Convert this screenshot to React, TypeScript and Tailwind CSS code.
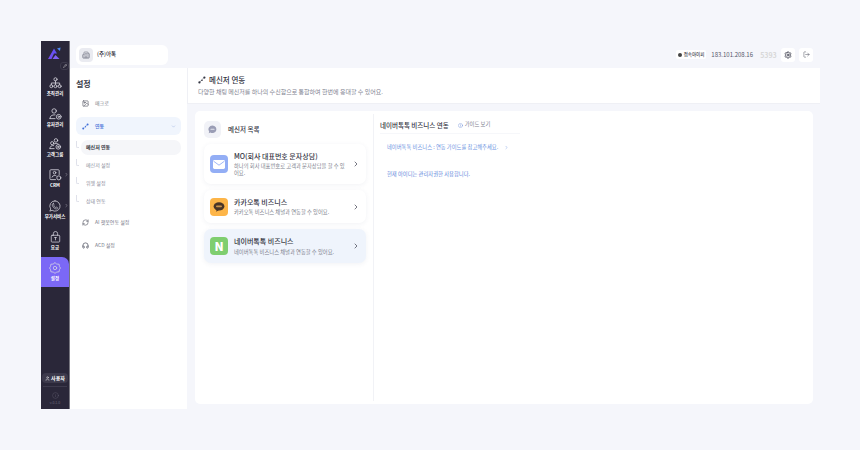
import {
  Building2,
  ChevronDown,
  ChevronRight,
  Headphones,
  Info,
  LogOut,
  Pencil,
  RefreshCw,
  Settings,
  User,
  Image,
} from "lucide-react";

const font = "font-['Noto_Sans_CJK_KR','Noto_Sans',sans-serif]";

function Logo() {
  return (
    <svg viewBox="0 0 16 13" className="h-[13px] w-[16px]">
      <defs>
        <linearGradient id="logo" x1="0" y1="0" x2="1" y2="0">
          <stop offset="0" stopColor="#7a4df0" />
          <stop offset="1" stopColor="#5a52f5" />
        </linearGradient>
      </defs>
      <path d="M1 12 L7 1.5 L10 6.5 L7 6.5 L4.5 12 Z" fill="url(#logo)" />
      <path d="M5.5 12 L8.5 8 L12.5 12 Z" fill="#7f62f6" />
      <path d="M10 1.5 L13.5 0.5 L13 4 Z" fill="#4d8df7" />
    </svg>
  );
}

const stroke = {
  fill: "none",
  stroke: "currentColor",
  strokeWidth: 0.85,
  strokeLinecap: "round" as const,
  strokeLinejoin: "round" as const,
};

function OrgIcon() {
  return (
    <svg viewBox="0 0 14 13" className="h-[12px] w-[13px]" {...stroke}>
      <circle cx="7" cy="2.5" r="1.7" />
      <path d="M7 4.2 V8 M2.5 8.5 V6.5 H11.5 V8.5" />
      <circle cx="2.5" cy="10" r="1.6" />
      <circle cx="7" cy="10" r="1.6" />
      <circle cx="11.5" cy="10" r="1.6" />
    </svg>
  );
}

function UserGearIcon() {
  return (
    <svg viewBox="0 0 14 13" className="h-[12px] w-[13px]" {...stroke}>
      <circle cx="5.5" cy="3.2" r="2.4" />
      <path d="M1 11.5 C1 8.5 3 7.2 6.5 7.4 M1 11.5 H6.5" />
      <circle cx="10.5" cy="9.5" r="2.6" />
      <circle cx="10.5" cy="9.5" r="0.8" />
    </svg>
  );
}

function GroupIcon() {
  return (
    <svg viewBox="0 0 14 13" className="h-[12px] w-[13px]" {...stroke}>
      <circle cx="7.5" cy="2.6" r="1.9" />
      <circle cx="3.4" cy="5.6" r="1.7" />
      <path d="M1 11.5 C0.8 9 2.5 8 5 8.2 M1 11.5 H5.5 M5.5 6.5 C7 5.6 8.5 5.6 10 6.5" />
      <circle cx="10" cy="9.6" r="2.5" />
      <circle cx="10" cy="9.6" r="0.8" />
    </svg>
  );
}

function CrmIcon() {
  return (
    <svg viewBox="0 0 14 13" className="h-[12px] w-[13px]" {...stroke}>
      <path d="M7 11.5 H2 A1 1 0 0 1 1 10.5 V1.8 A1 1 0 0 1 2 0.8 H10 A1 1 0 0 1 11 1.8 V6" />
      <circle cx="6" cy="4" r="1.4" />
      <path d="M3.2 8.8 C3.6 6.6 7.6 6.4 8 7.4" />
      <circle cx="10.6" cy="9.6" r="2.2" />
    </svg>
  );
}

function PhoneBubbleIcon() {
  return (
    <svg viewBox="0 0 14 14" className="h-[12px] w-[12px]" {...stroke}>
      <path d="M7 1 A6 6 0 1 1 3.6 12 L1 13 L2 10.4 A6 6 0 0 1 7 1 Z" />
      <path
        d="M5 4 L6 6 L5.4 6.8 C5.9 7.8 6.6 8.4 7.5 8.8 L8.3 8.1 L10.2 9.1 C10 10.2 9 10.7 8 10.4 C5.8 9.8 4.2 8 3.8 6 C3.6 5 4.2 4.2 5 4 Z"
        strokeWidth="0.7"
      />
    </svg>
  );
}

function LockIcon() {
  return (
    <svg viewBox="0 0 13 14" className="h-[12px] w-[11px]" {...stroke}>
      <path d="M4 5 V3 A2.5 2.5 0 0 1 9 3 V5" />
      <rect x="1.5" y="5" width="10" height="8" rx="1" />
      <path d="M6.5 7.6 V10.4 M5.4 7.6 H7.6" />
    </svg>
  );
}

function HexGearIcon() {
  return (
    <svg viewBox="0 0 14 14" className="h-[12px] w-[12px]" {...stroke}>
      <path d="M7 0.8 L9 2.4 L11.8 2.6 L12.2 5.4 L13.4 7 L12.2 8.8 L11.8 11.4 L9 11.8 L7 13.2 L5 11.8 L2.2 11.4 L1.8 8.8 L0.6 7 L1.8 5.4 L2.2 2.6 L5 2.4 Z" />
      <circle cx="7" cy="7" r="2" />
    </svg>
  );
}

function LinkIcon({ className }: { className: string }) {
  return (
    <svg viewBox="0 0 10 10" className={className} fill="currentColor">
      <path d="M2 8 L7.5 2" stroke="currentColor" strokeWidth="0.9" strokeDasharray="1.6 1" fill="none" />
      <circle cx="1.8" cy="8" r="1.4" />
      <circle cx="8" cy="2" r="1.4" />
      <circle cx="5" cy="5.4" r="1" />
    </svg>
  );
}

function MailIcon() {
  return (
    <svg viewBox="0 0 12 9" className="h-[9px] w-[12px]">
      <rect width="12" height="9" rx="1.4" fill="#fff" />
      <path d="M0.6 1.2 L6 5.2 L11.4 1.2" fill="none" stroke="#93aef5" strokeWidth="0.9" />
    </svg>
  );
}

function KakaoIcon() {
  return (
    <svg viewBox="0 0 12 10" className="h-[10px] w-[12px]">
      <ellipse cx="6" cy="4.4" rx="5.4" ry="4.2" fill="#4a3526" />
      <path d="M3.6 7.4 L3.2 9.8 L6 8" fill="#4a3526" />
      <rect x="3" y="3.4" width="6" height="1.8" rx="0.9" fill="#c9934a" />
    </svg>
  );
}

function ChatDotsIcon() {
  return (
    <svg viewBox="0 0 10 10" className="h-[9px] w-[9px]">
      <path d="M5 0.6 A4.4 4.2 0 1 1 2.6 8.4 L0.8 9.2 L1.3 7.2 A4.4 4.2 0 0 1 5 0.6 Z" fill="#9a9db5" />
      <rect x="2.6" y="4.2" width="4.8" height="1" rx="0.5" fill="#e4e5ee" />
    </svg>
  );
}

function NavItem({
  icon,
  label,
  active,
  arrow,
  h,
}: {
  icon: React.ReactNode;
  label: string;
  active?: boolean;
  arrow?: boolean;
  h: string;
}) {
  return (
    <div
      className={`relative flex flex-col items-center justify-center gap-[1px] text-white ${h} ${
        active ? "rounded-tr-[7px] bg-[#7b68f6]" : ""
      }`}
    >
      <div className="flex h-[12px] items-center justify-center text-[#dcdbe4]">{icon}</div>
      <span className="text-[4.5px] font-bold leading-[7px]">{label}</span>
      {arrow && (
        <ChevronRight
          size={5}
          strokeWidth={2.4}
          className="absolute right-[0px] top-[9px] text-[#aaa9b5]"
        />
      )}
    </div>
  );
}

function Sidebar() {
  return (
    <aside className="flex w-[29px] shrink-0 flex-col border-r border-[#77767f] bg-[#2a2739]">
      <div className="relative flex h-[30px] shrink-0 items-center justify-center pb-[5px]">
        <Logo />
        <div className="absolute right-[0px] bottom-[1px] flex h-[8px] w-[9px] items-center justify-center rounded-[3px] border border-[#3d3a4c] bg-[#2a2739]">
          <Pencil size={4} className="text-white" />
        </div>
      </div>
      <NavItem h="h-[31px]" label="조직관리" icon={<OrgIcon />} />
      <NavItem h="h-[31px]" label="유저관리" icon={<UserGearIcon />} />
      <NavItem h="h-[30px]" label="고객그룹" icon={<GroupIcon />} />
      <NavItem h="h-[31px]" label="CRM" arrow icon={<CrmIcon />} />
      <NavItem h="h-[31px]" label="부가서비스" arrow icon={<PhoneBubbleIcon />} />
      <NavItem h="h-[32px]" label="요금" icon={<LockIcon />} />
      <NavItem h="h-[30px]" label="설정" active icon={<HexGearIcon />} />
      <div className="flex-1" />
      <div className="mx-[1px] flex h-[10px] items-center justify-center gap-[1px] rounded-[4px] bg-[#3c394b] text-[5px] font-bold text-white">
        <User size={5} strokeWidth={2} />
        <span>사용자</span>
      </div>
      <div className="mx-[2px] mt-[3px] border-t border-[#3d3a4c]" />
      <div className="flex h-[22px] flex-col items-center justify-center gap-[1px] text-[#6b6979]">
        <Info size={7} strokeWidth={1.2} />
        <span className="text-[3.5px] leading-[5px]">v.0.1.0</span>
      </div>
    </aside>
  );
}

function TopBar() {
  return (
    <div className="flex h-[27px] shrink-0 items-center justify-between pr-[7px] pl-[6px]">
      <div className="flex h-[20px] w-[92px] items-center gap-[4px] rounded-[6px] bg-white px-[3px]">
        <div className="flex h-[14px] w-[14px] items-center justify-center rounded-[4px] bg-[#eaebf1]">
          <Building2 size={8} className="text-[#777a8a]" />
        </div>
        <span className="text-[5.5px] font-medium text-[#2b2b35]">(주)아톡</span>
      </div>
      <div className="flex items-center">
        <div className="flex h-[9px] items-center gap-[2px] rounded-[2px] bg-white px-[2px] text-[4.5px] font-medium text-[#3d3d4a]">
          <span className="h-[4px] w-[4px] rounded-full bg-[#444]" />
          접속아이피
        </div>
        <span className="ml-[5px] text-[6px] text-[#55566a]">183.101.208.16</span>
        <span className="ml-[6px] w-[19px] text-center text-[7px] font-bold leading-[10px] text-[#d8d8d8]">
          5393
        </span>
        <div className="ml-[3px] flex h-[14px] w-[14px] items-center justify-center rounded-[3px] bg-white">
          <Settings size={8} strokeWidth={2.6} className="text-[#444655]" />
        </div>
        <div className="ml-[4px] flex h-[14px] w-[14px] items-center justify-center rounded-[3px] bg-white">
          <LogOut size={7} strokeWidth={1.6} className="text-[#444655]" />
        </div>
      </div>
    </div>
  );
}

function SubItem({ label, active }: { label: string; active?: boolean }) {
  return (
    <div className="relative flex h-[14px] items-center pl-[5px]">
      <span className="absolute left-0 top-[1px] h-[7px] w-[3px] rounded-bl-[2px] border-b border-l border-[#dfe1ea]" />
      <div
        className={`flex h-[15px] flex-1 items-center rounded-[7px] pl-[5px] text-[5px] ${
          active ? "bg-[#f5f6f9] font-semibold text-[#33343f]" : "text-[#8c8e9c]"
        }`}
      >
        {label}
      </div>
    </div>
  );
}

function SettingsMenu() {
  return (
    <nav className="w-[117px] shrink-0 rounded-tl-[2px] bg-white pt-[10px] pr-[6px] pl-[6px]">
      <h2 className="text-[8px] font-semibold leading-[12px] text-[#3a3b47]">설정</h2>
      <div className="mt-[4px] flex h-[18px] items-center gap-[6px] pl-[6px] text-[5px] text-[#7a7c8a]">
        <Image size={7} className="text-[#4b4d5c]" />
        <span>매크로</span>
      </div>
      <div className="mt-[5px] flex h-[18px] items-center gap-[6px] rounded-[6px] bg-[#f0f5fd] pl-[6px] pr-[5px] text-[5px] font-medium text-[#3f6fd8]">
        <LinkIcon className="h-[7px] w-[7px]" />
        <span className="flex-1">연동</span>
        <ChevronDown size={5} className="text-[#8fa8dc]" />
      </div>
      <div className="mt-[5px] flex flex-col gap-[4px]">
        <SubItem label="메신저 연동" active />
        <SubItem label="메신저 설정" />
        <SubItem label="위젯 설정" />
        <SubItem label="상태 연동" />
      </div>
      <div className="mt-[5px] flex h-[18px] items-center gap-[6px] pl-[6px] text-[5px] text-[#7a7c8a]">
        <RefreshCw size={7} className="text-[#4b4d5c]" />
        <span>AI 챗봇연동 설정</span>
      </div>
      <div className="mt-[5px] flex h-[18px] items-center gap-[6px] pl-[6px] text-[5px] text-[#7a7c8a]">
        <Headphones size={7} strokeWidth={2.4} className="text-[#4b4d5c]" />
        <span>ACD 설정</span>
      </div>
    </nav>
  );
}

function MessengerCard({
  icon,
  title,
  desc,
  selected,
  h,
}: {
  icon: React.ReactNode;
  title: string;
  desc: string;
  selected?: boolean;
  h: string;
}) {
  return (
    <div
      className={`flex items-center gap-[6px] rounded-[7px] pr-[6px] pl-[6px] shadow-[0_1px_5px_rgba(60,70,110,0.07)] ${h} ${
        selected ? "bg-[#eff4fc]" : "bg-white"
      }`}
    >
      {icon}
      <div className="min-w-0 flex-1">
        <p className="text-[7px] font-medium leading-[10px] text-[#33343f]">{title}</p>
        <p className="mt-[2.5px] text-[5.3px] leading-[7px] break-all text-[#7d7f8c]">{desc}</p>
      </div>
      <ChevronRight size={8} strokeWidth={2.2} className="shrink-0 text-[#444655]" />
    </div>
  );
}

function MainContent() {
  return (
    <main className="flex min-w-0 flex-1 flex-col">
      <header className="h-[36px] shrink-0 border-b border-l border-[#eff0f5] bg-white px-[10px] pt-[6px]">
        <div className="flex items-center gap-[3px]">
          <LinkIcon className="h-[8px] w-[8px] text-[#333542]" />
          <h1 className="text-[7.5px] font-medium leading-[12px] text-[#33343f]">메신저 연동</h1>
        </div>
        <p className="mt-[2px] text-[6px] leading-[8px] text-[#80828f]">
          다양한 채팅 메신저를 하나의 수신함으로 통합하여 한번에 응대할 수 있어요.
        </p>
      </header>
      <div className="flex min-h-0 flex-1 pt-[7px] pr-[7px] pb-[5px] pl-[8px]">
        <section className="flex flex-1 rounded-[5px] bg-white">
          <div className="my-[3px] w-[179px] shrink-0 border-r border-[#f1f2f6] pt-[7px] pr-[7px] pl-[9px]">
            <div className="flex items-center gap-[7px]">
              <div className="flex h-[17px] w-[17px] items-center justify-center rounded-[5px] bg-[#f1f2f7]">
                <ChatDotsIcon />
              </div>
              <span className="text-[6.5px] font-medium text-[#33343f]">메신저 목록</span>
            </div>
            <div className="mt-[6px] flex flex-col gap-[6px]">
              <MessengerCard
                h="h-[40px]"
                title="MO(회사 대표번호 문자상담)"
                desc="하나의 회사 대표번호로 고객과 문자상담을 할 수 있어요."
                icon={
                  <div className="flex h-[18px] w-[18px] shrink-0 items-center justify-center rounded-[4px] bg-[#93aef5]">
                    <MailIcon />
                  </div>
                }
              />
              <MessengerCard
                h="h-[33px]"
                title="카카오톡 비즈니스"
                desc="카카오톡 비즈니스 채널과 연동할 수 있어요."
                icon={
                  <div className="flex h-[18px] w-[18px] shrink-0 items-center justify-center rounded-[4px] bg-[#fdb548]">
                    <KakaoIcon />
                  </div>
                }
              />
              <MessengerCard
                selected
                h="h-[34px]"
                title="네이버톡톡 비즈니스"
                desc="네이버톡톡 비즈니스 채널과 연동할 수 있어요."
                icon={
                  <div className="flex h-[18px] w-[18px] shrink-0 items-center justify-center rounded-[4px] bg-[#7fce6f] text-[12px] font-black text-white">
                    N
                  </div>
                }
              />
            </div>
          </div>
          <div className="min-w-0 flex-1 pt-[9px] pl-[6px]">
            <div className="flex items-center gap-[9px]">
              <span className="text-[6.5px] font-medium leading-[10px] text-[#33343f]">
                네이버톡톡 비즈니스 연동
              </span>
              <span className="flex items-center gap-[2px] text-[5.3px] text-[#80828f]">
                <Info size={5} className="text-[#6f8fd8]" />
                가이드 보기
              </span>
            </div>
            <div className="mt-[3px] w-[140px] border-t border-[#f6f7fa]" />
            <div className="mt-[9px] flex items-center pl-[7px] text-[5.3px] leading-[8px] text-[#6d94e2]">
              <span>네이버톡톡 비즈니스 : 연동 가이드를 참고해주세요.</span>
              <ChevronRight size={5} className="ml-[6px]" />
            </div>
            <p className="mt-[19px] pl-[7px] text-[5.3px] leading-[8px] text-[#5c85da]">
              현재 아이디는 관리자권한 사용합니다.
            </p>
          </div>
        </section>
      </div>
    </main>
  );
}

export default function App() {
  return (
    <div className={`h-[450px] w-[860px] bg-[#f5f6fb] pt-[41px] pr-[40px] pb-[41px] pl-[41px] ${font}`}>
      <div className="flex h-[368px]">
        <Sidebar />
        <div className="flex min-w-0 flex-1 flex-col">
          <TopBar />
          <div className="flex min-h-0 flex-1">
            <SettingsMenu />
            <MainContent />
          </div>
        </div>
      </div>
    </div>
  );
}
